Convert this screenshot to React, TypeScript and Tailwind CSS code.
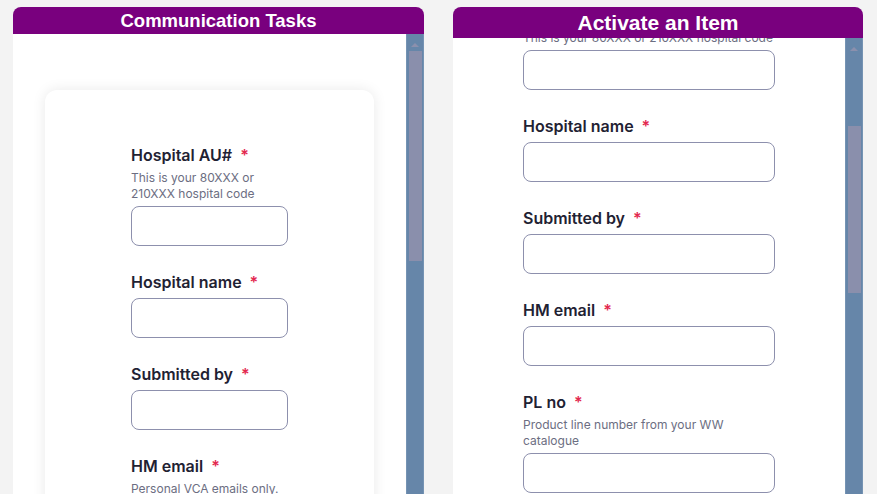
const inter = { fontFamily: 'Inter, "Noto Sans", sans-serif' };

type FieldProps = {
  label: string;
  hint?: string;
  last?: boolean;
};

const Field = ({ label, hint, last }: FieldProps) => (
  <div className={last ? '' : 'mb-[26px]'}>
    <div className={`text-base leading-5 font-semibold text-[#1f2233] ${hint ? 'mb-[5px]' : 'mb-1.5'}`}>
      {label}
      <span className="ml-2 text-[#e3294f]">*</span>
    </div>
    {hint && <p className="text-xs leading-4 text-[#6c6e82] mb-1">{hint}</p>}
    <div className="h-10 w-full rounded-lg border border-[#8d90ad] bg-white" />
  </div>
);

const Scrollbar = ({ thumbTop, thumbHeight }: { thumbTop: string; thumbHeight: string }) => (
  <div className="w-[18px] shrink-0 bg-[#6686a9] flex flex-col items-center border-x border-[#7593b3]">
    <div className="h-[17px] w-full flex items-center justify-center pt-1">
      <div className="w-0 h-0 border-x-[4px] border-x-transparent border-b-[4px] border-b-[#8b90ad]" />
    </div>
    <div className={`w-[13px] bg-[#8a8fac] ${thumbTop} ${thumbHeight}`} />
  </div>
);

const Header = ({ title, tall }: { title: string; tall?: boolean }) => (
  <div
    className={`bg-[#79007e] rounded-t-lg flex items-center justify-center text-white font-bold ${
      tall ? 'h-[31px] text-[21px]' : 'h-[27px] text-[18.5px]'
    }`}
    style={{ fontFamily: '"Liberation Sans", Arial, sans-serif' }}
  >
    {title}
  </div>
);

export default function App() {
  return (
    <div className="h-[494px] w-[877px] overflow-hidden bg-[#f3f3f3] flex gap-[29px] pl-[13px] pt-[7px]" style={inter}>
      {/* left panel */}
      <div className="w-[411px] flex flex-col shrink-0">
        <Header title="Communication Tasks" />
        <div className="flex flex-1 min-h-0">
          <div className="flex-1 bg-white overflow-hidden pt-[56px] px-[32px]">
            <div className="bg-white rounded-xl shadow-[0_0_14px_rgba(0,0,0,0.09)] pt-[55px] pb-10 flex justify-center">
              <div className="w-[157px]">
                <Field label="Hospital AU#" hint="This is your 80XXX or 210XXX hospital code" />
                <Field label="Hospital name" />
                <Field label="Submitted by" />
                <Field label="HM email" hint="Personal VCA emails only." last />
              </div>
            </div>
          </div>
          <Scrollbar thumbTop="mt-0" thumbHeight="h-[210px]" />
        </div>
      </div>

      {/* right panel */}
      <div className="w-[410px] flex flex-col shrink-0">
        <Header title="Activate an Item" tall />
        <div className="flex flex-1 min-h-0">
          <div className="flex-1 bg-white overflow-hidden px-[70px]">
            <div className="-mt-2">
              <p className="text-xs leading-4 text-[#6c6e82] mb-1">This is your 80XXX or 210XXX hospital code</p>
              <div className="h-10 w-full rounded-lg border border-[#8d90ad] bg-white mb-[26px]" />
              <Field label="Hospital name" />
              <Field label="Submitted by" />
              <Field label="HM email" />
              <Field label="PL no" hint="Product line number from your WW catalogue" last />
            </div>
          </div>
          <Scrollbar thumbTop="mt-[71px]" thumbHeight="h-[167px]" />
        </div>
      </div>
    </div>
  );
}
